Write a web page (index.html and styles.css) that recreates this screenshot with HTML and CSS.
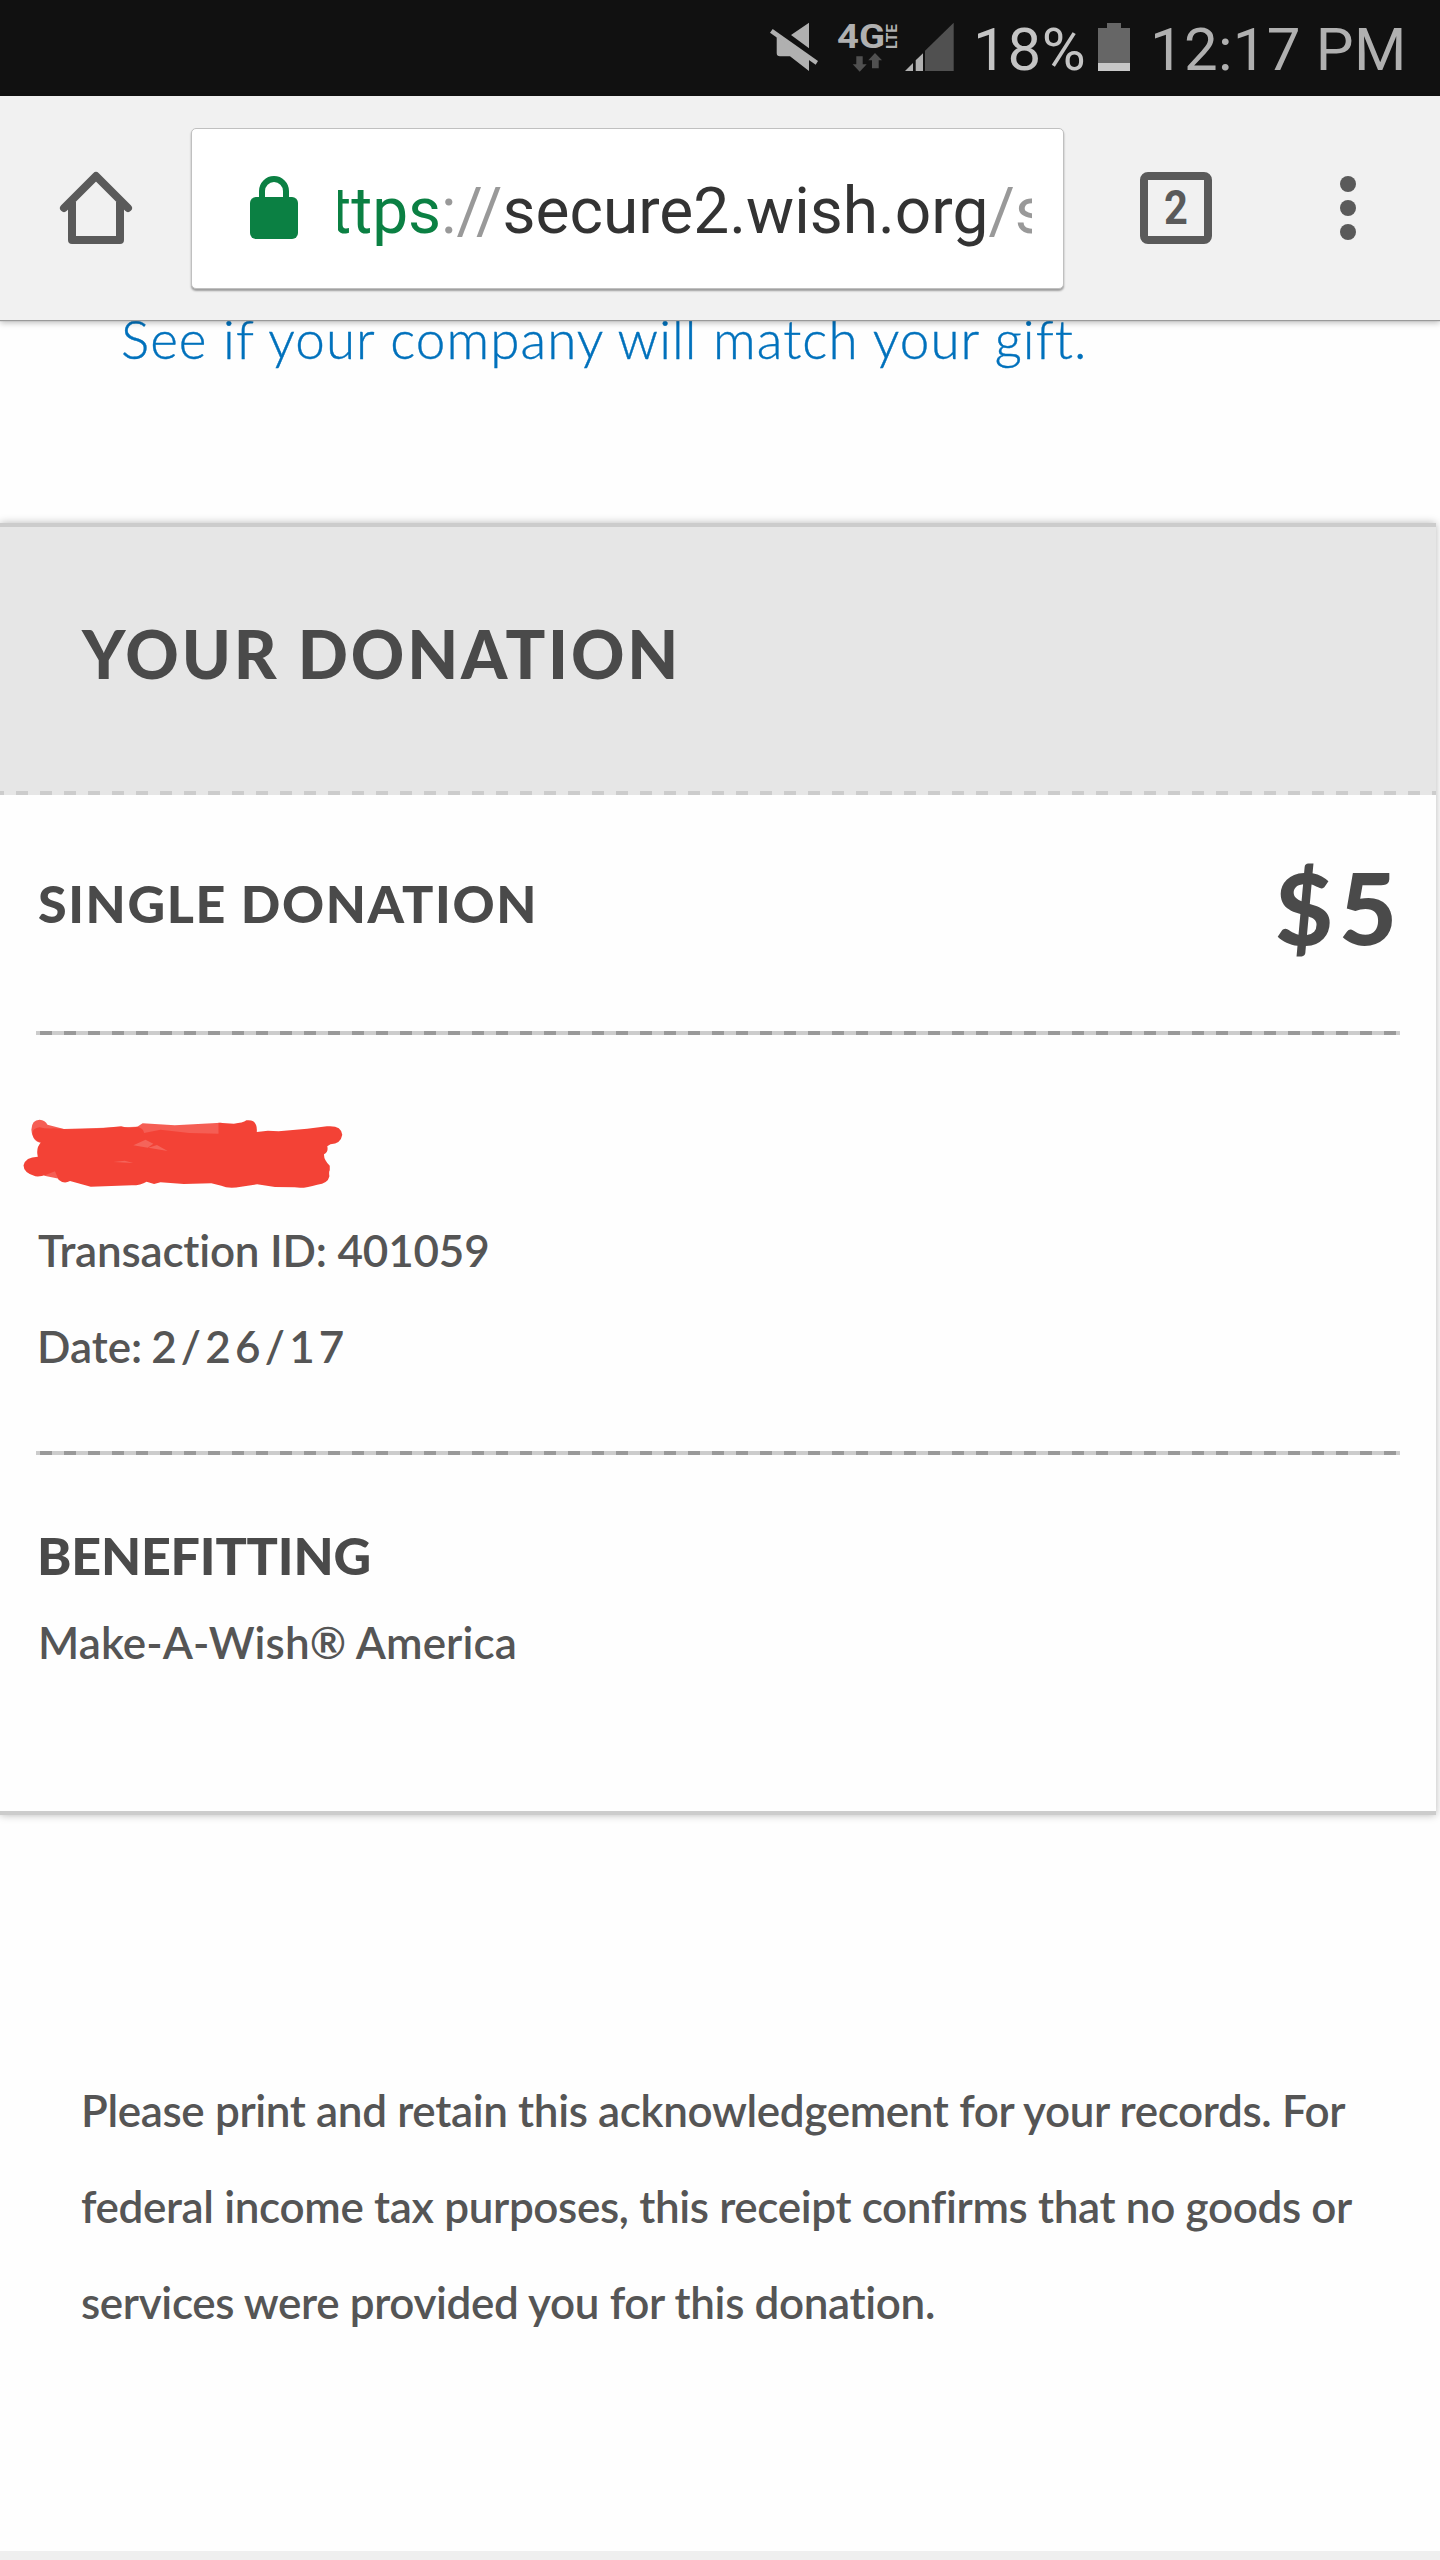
FILE: index.html
```
<!DOCTYPE html>
<html lang="en">
<head>
    <meta charset="UTF-8">
    <meta name="viewport" content="width=device-width, initial-scale=1.0">
    <title>Your Donation</title>
    <link rel="stylesheet" href="styles.css">
</head>
<body>
    <div class="status-bar">
        <svg class="mute" width="50" height="50" viewBox="0 0 50 50">
            <path fill="#b0b0b0" d="M21 13L39 .7V26.3zM6.7 14.7L39 36V49L20 34.3H10Q6.7 34.3 6.7 31z"/>
            <path fill="#b0b0b0" d="M0 10.7L2.7 7L48 39L45.7 42.7z"/>
        </svg>
        <svg class="network" width="60" height="50" viewBox="0 0 60 50">
            <text class="net-4g" x="-1" y="26.3" textLength="48" lengthAdjust="spacingAndGlyphs">4G</text>
            <text class="net-lte" transform="translate(59 27) rotate(-90)" textLength="25" lengthAdjust="spacingAndGlyphs">LTE</text>
            <path fill="#505050" d="M18.3 34.3H24.7V42.3H28.7L21.7 49.7L14.7 42.3H18.3zM37 31L44 38.3H40.7V46.3H34V38.3H30.3z"/>
        </svg>
        <svg class="signal" width="49" height="50" viewBox="0 0 49 50">
            <path fill="#b0b0b0" d="M0 49L8 41V49zM10.7 38.3L18 31.3V49H10.7z"/>
            <path fill="#505050" d="M20 28.7L48.7 .7V49H20z"/>
        </svg>
        <span class="percent">18%</span>
        <svg class="battery" width="32" height="50" viewBox="0 0 32 50">
            <path fill="#666" d="M0 6H9V1H23V6H32V49H0z"/>
            <path fill="#c8c8c8" d="M0 41H32V49H0z"/>
        </svg>
        <span class="clock">12:17 PM</span>
    </div>

    <div class="toolbar">
        <svg class="home" width="72" height="72" viewBox="0 0 72 72">
            <path fill="none" stroke="#5a5a5a" stroke-width="8" stroke-linecap="round" stroke-linejoin="round" d="M4 36L36 4L68 36"/>
            <path fill="none" stroke="#5a5a5a" stroke-width="8" stroke-linejoin="round" d="M12 30V68H60V30"/>
        </svg>
        <div class="url-box">
            <svg class="lock" width="48" height="64" viewBox="0 0 48 64">
                <path fill="none" stroke="#0b8043" stroke-width="6" d="M12 24V15a12 12 0 0 1 24 0V24"/>
                <rect fill="#0b8043" y="21" width="48" height="42" rx="6"/>
            </svg>
            <div class="url"><span class="scheme">https</span><span class="dim">://</span>secure2.wish.org<span class="dim">/s</span></div>
        </div>
        <div class="tabs"><span>2</span></div>
        <div class="menu"><i></i><i></i><i></i></div>
    </div>

    <div class="content">
        <p class="match"><a>See if your company will match your gift.</a></p>

        <div class="card">
            <div class="card-header">
                <h1>YOUR DONATION</h1>
            </div>
            <div class="card-body">
                <div class="amount-row">
                    <h2>SINGLE DONATION</h2>
                    <span class="amount">$5</span>
                </div>
                <div class="divider"></div>
                <svg class="scribble" width="322" height="71" viewBox="60 115 900 213" preserveAspectRatio="none">
                    <path fill="#f34236" fill-opacity=".85" d="M89 150Q90 120 112 120Q128 122 134 135L180 148L385 141L400 131L490 137L620 129L640 200L300 290L180 300L125 288L120 190Q92 188 89 150z"/>
                    <path fill="#f34236" d="M92 162Q92 145 112 143Q130 148 150 146L190 149L270 147L340 140L362 146L385 141Q402 145 404 160L450 150L530 160L612 162V129L655 132Q680 130 690 122Q722 118 719 157L750 153L780 155L860 147L915 140Q955 136 958 165Q954 192 925 194L916 200Q920 216 907 224Q906 240 923 258V272Q920 275 922 290Q918 312 888 315Q850 328 825 323L770 322L720 314L675 321Q640 328 620 318L592 311L515 313L450 308L432 313L411 306Q395 317 370 317L255 321L197 304Q180 314 165 300L155 275L130 285Q115 292 100 290Q67 280 67 257Q72 232 107 231Q101 205 116 188Q95 182 92 162z"/>
                    <path fill="#fff" fill-opacity=".18" d="M374 197L408 180L430 192L414 204zM416 204L440 196L470 214zM318 247L350 243L374 250z"/>
                </svg>
                <p class="transaction">Transaction ID: 401059</p>
                <p class="date">Date: <span>2/26/17</span></p>
                <div class="divider"></div>
                <h2 class="benefit">BENEFITTING</h2>
                <p class="charity">Make-A-Wish® America</p>
            </div>
        </div>

        <p class="notice">Please print and retain this acknowledgement for your records. For<br>federal income tax purposes, this receipt confirms that no goods or<br>services were provided you for this donation.</p>
    </div>
</body>
</html>
```
FILE: styles.css
```
* {
    box-sizing: border-box;
}
body {
    margin: 0;
    width: 1440px;
    height: 2560px;
    overflow: hidden;
    background: #efefef;
    font-family: Lato, "Open Sans", sans-serif;
    color: #555;
}
h1, h2, p {
    margin: 0;
}
svg {
    display: block;
    flex: none;
    overflow: visible;
}

/* Android status bar */
.status-bar {
    display: flex;
    height: 96px;
    padding: 22px 0 0 770px;
    background: #111;
    color: #b0b0b0;
    font: 60px/55px Roboto, sans-serif;
    white-space: nowrap;
}
.network {
    margin-left: 18px;
}
.net-4g {
    font: bold 33px Roboto, sans-serif;
    fill: #b0b0b0;
}
.net-lte {
    font: bold 14px Roboto, sans-serif;
    fill: #b0b0b0;
}
.signal {
    margin-left: 7px;
}
.percent {
    width: 125px;
    margin-left: 19px;
    color: #c4c4c4;
    letter-spacing: 0.7px;
}
.clock {
    margin-left: 20px;
    letter-spacing: 0.25px;
}

/* browser toolbar */
.toolbar {
    position: relative;
    z-index: 1;
    display: flex;
    align-items: center;
    height: 224px;
    padding: 0 84px 0 60px;
    background: #f1f1f1;
    box-shadow: 0 1px 1px #999, 0 3px 6px rgba(0, 0, 0, 0.25);
}
.url-box {
    display: flex;
    align-items: center;
    width: 873px;
    height: 161px;
    margin-left: 59px;
    padding-left: 58px;
    background: #fff;
    border: 1px solid #c0c0c0;
    border-radius: 5px;
    box-shadow: 0 2px 2px rgba(0, 0, 0, 0.35);
}
.url {
    display: flex;
    width: 694px;
    margin-left: 40px;
    padding-top: 7px;
    overflow: hidden;
    font: 64px/82px Roboto, sans-serif;
    color: #333;
    white-space: nowrap;
}
.scheme {
    margin-left: -43px;
    color: #0b8043;
}
.dim {
    color: #999;
}
.tabs {
    display: flex;
    align-items: center;
    justify-content: center;
    width: 72px;
    height: 72px;
    margin-left: 76px;
    border: 8px solid #5a5a5a;
    border-radius: 8px;
    color: #5a5a5a;
    font: bold 49px/56px Roboto, sans-serif;
}
.tabs span {
    transform: scaleX(0.85);
}
.menu {
    display: flex;
    flex-direction: column;
    gap: 8px;
    margin-left: auto;
}
.menu i {
    width: 16px;
    height: 16px;
    border-radius: 50%;
    background: #5a5a5a;
}

/* page */
.content {
    height: 2231px;
    overflow: hidden;
    background: #fefefe;
}
.match {
    margin: -13px 0 152px;
    padding-left: 121px;
    font-size: 53px;
    font-weight: 300;
    line-height: 64px;
    letter-spacing: 1.07px;
    color: #0071bc;
    -webkit-text-stroke: 0.4px #0071bc;
}
.card {
    width: 1436px;
    height: 1292px;
    border-top: 4px solid #ccc;
    border-bottom: 4px solid #ccc;
    box-shadow: 0 0 8px rgba(0, 0, 0, 0.28);
}
.card-header {
    height: 268px;
    padding: 95px 0 0 82px;
    background: repeating-linear-gradient(to right, #ccc 0 12px, #e6e6e6 12px 24px) -8px 100% / 1464px 4px no-repeat #e6e6e6;
}
h1 {
    font-size: 66px;
    font-weight: 900;
    line-height: 64px;
    letter-spacing: 2.8px;
    color: #4a4a4a;
}
.card-body {
    padding: 0 36px;
}
.amount-row {
    display: flex;
    justify-content: space-between;
    height: 236px;
}
h2 {
    padding: 80px 0 0 2px;
    font-size: 52px;
    font-weight: 900;
    line-height: 56px;
    letter-spacing: 1.6px;
    color: #4a4a4a;
}
.amount {
    margin-right: -3px;
    padding-top: 61px;
    font-size: 100px;
    font-weight: 900;
    line-height: 100px;
    letter-spacing: 6px;
    color: #4a4a4a;
}
.divider {
    height: 4px;
    background: repeating-linear-gradient(to right, #ccc 0 4px, #999 4px 16px, #ccc 16px 24px);
}
.scribble {
    margin: 83px 0 13px -15px;
}
.transaction, .date, .charity {
    font-size: 44px;
    font-weight: 600;
    line-height: 96px;
}
.transaction {
    padding-left: 2px;
    letter-spacing: -0.2px;
}
.date {
    margin-bottom: 57px;
    padding-left: 1px;
}
.date span {
    margin-left: -2px;
    letter-spacing: 4.2px;
}
.benefit {
    padding: 72px 0 0 1px;
    letter-spacing: -0.2px;
}
.charity {
    margin-top: 11px;
    padding-left: 2px;
    letter-spacing: 0.1px;
}
.notice {
    margin-top: 247px;
    padding-left: 81px;
    font-size: 44px;
    font-weight: 600;
    line-height: 96px;
    letter-spacing: -0.36px;
    white-space: nowrap;
}
```
